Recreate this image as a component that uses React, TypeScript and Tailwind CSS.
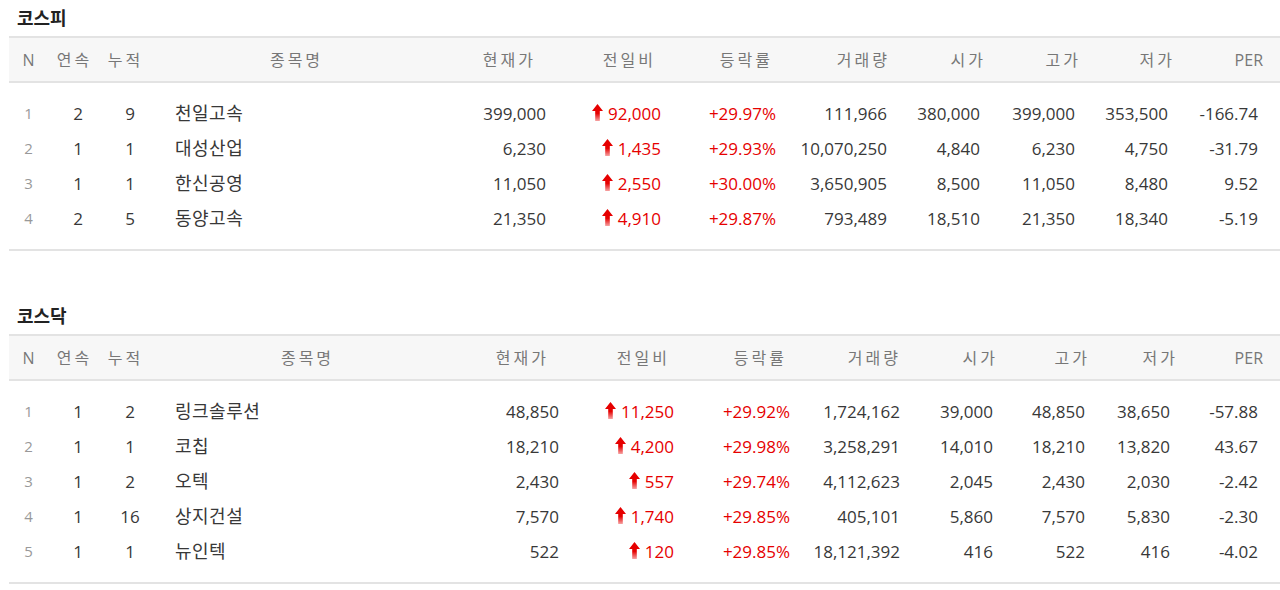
import React from "react";

type Col = { w: string; hp: string; dp: string };

type Row = {
  n: number;
  streak: string;
  total: string;
  name: string;
  price: string;
  diff: string;
  rate: string;
  vol: string;
  open: string;
  high: string;
  low: string;
  per: string;
};

const kospiCols: Col[] = [
  { w: "w-[132px]", hp: "pr-[36px]", dp: "pr-[26px]" },
  { w: "w-[112px]", hp: "pr-[28px]", dp: "pr-[23px]" },
  { w: "w-[114px]", hp: "pr-[25px]", dp: "pr-[22px]" },
  { w: "w-[110px]", hp: "pr-[18px]", dp: "pr-[21px]" },
  { w: "w-[92px]", hp: "pr-[14px]", dp: "pr-[20px]" },
  { w: "w-[94px]", hp: "pr-[13px]", dp: "pr-[19px]" },
  { w: "w-[94px]", hp: "pr-[13px]", dp: "pr-[20px]" },
  { w: "w-[92px]", hp: "pr-[17px] tracking-normal", dp: "pr-[22px]" },
];

const kosdaqCols: Col[] = [
  { w: "w-[126px]", hp: "pr-[39px]", dp: "pr-[29px]" },
  { w: "w-[112px]", hp: "pr-[30px]", dp: "pr-[26px]" },
  { w: "w-[110px]", hp: "pr-[23px]", dp: "pr-[20px]" },
  { w: "w-[110px]", hp: "pr-[19px]", dp: "pr-[20px]" },
  { w: "w-[90px]", hp: "pr-[12px]", dp: "pr-[17px]" },
  { w: "w-[90px]", hp: "pr-[10px]", dp: "pr-[15px]" },
  { w: "w-[88px]", hp: "pr-[10px]", dp: "pr-[18px]" },
  { w: "w-[92px]", hp: "pr-[17px] tracking-normal", dp: "pr-[22px]" },
];

const kospi: Row[] = [
  { n: 1, streak: "2", total: "9", name: "천일고속", price: "399,000", diff: "92,000", rate: "+29.97%", vol: "111,966", open: "380,000", high: "399,000", low: "353,500", per: "-166.74" },
  { n: 2, streak: "1", total: "1", name: "대성산업", price: "6,230", diff: "1,435", rate: "+29.93%", vol: "10,070,250", open: "4,840", high: "6,230", low: "4,750", per: "-31.79" },
  { n: 3, streak: "1", total: "1", name: "한신공영", price: "11,050", diff: "2,550", rate: "+30.00%", vol: "3,650,905", open: "8,500", high: "11,050", low: "8,480", per: "9.52" },
  { n: 4, streak: "2", total: "5", name: "동양고속", price: "21,350", diff: "4,910", rate: "+29.87%", vol: "793,489", open: "18,510", high: "21,350", low: "18,340", per: "-5.19" },
];

const kosdaq: Row[] = [
  { n: 1, streak: "1", total: "2", name: "링크솔루션", price: "48,850", diff: "11,250", rate: "+29.92%", vol: "1,724,162", open: "39,000", high: "48,850", low: "38,650", per: "-57.88" },
  { n: 2, streak: "1", total: "1", name: "코칩", price: "18,210", diff: "4,200", rate: "+29.98%", vol: "3,258,291", open: "14,010", high: "18,210", low: "13,820", per: "43.67" },
  { n: 3, streak: "1", total: "2", name: "오텍", price: "2,430", diff: "557", rate: "+29.74%", vol: "4,112,623", open: "2,045", high: "2,430", low: "2,030", per: "-2.42" },
  { n: 4, streak: "1", total: "16", name: "상지건설", price: "7,570", diff: "1,740", rate: "+29.85%", vol: "405,101", open: "5,860", high: "7,570", low: "5,830", per: "-2.30" },
  { n: 5, streak: "1", total: "1", name: "뉴인텍", price: "522", diff: "120", rate: "+29.85%", vol: "18,121,392", open: "416", high: "522", low: "416", per: "-4.02" },
];

const heads = ["현재가", "전일비", "등락률", "거래량", "시가", "고가", "저가", "PER"];

const UpArrow = () => (
  <svg width="11" height="17" viewBox="0 0 11 17" className="inline-block align-[-1px] mr-[5px]">
    <defs>
      <linearGradient id="upg" x1="0" y1="0" x2="0" y2="1">
        <stop offset="0" stopColor="#e60000" />
        <stop offset="0.55" stopColor="#e60000" />
        <stop offset="1" stopColor="#f6a3a3" />
      </linearGradient>
    </defs>
    <path d="M5.5 0 L11 7 L7.8 7 L7.8 17 L3.2 17 L3.2 7 L0 7 Z" fill="url(#upg)" />
  </svg>
);

const Market = ({ title, rows, cols, nameW }: { title: string; rows: Row[]; cols: Col[]; nameW: string }) => (
  <section>
    <h2 className="pl-2 pt-[6px] pb-[6px] leading-6 text-[18px] font-bold text-[#222]">{title}</h2>
    <table className="table-fixed border-collapse w-[1271px]">
      <colgroup>
        <col className="w-[39px]" />
        <col className="w-[50px]" />
        <col className="w-[52px]" />
        <col className={nameW} />
        {cols.map((c, i) => (
          <col key={i} className={c.w} />
        ))}
      </colgroup>
      <thead>
        <tr className="bg-[#f7f7f7] border-t-2 border-b-2 border-[#e3e3e3] h-[45px] text-[16px] text-[#777] font-normal">
          <th className="font-normal text-center">N</th>
          <th className="font-normal text-center tracking-[3px] pl-[3px]">연속</th>
          <th className="font-normal text-center tracking-[3px] pl-[3px]">누적</th>
          <th className="font-normal text-center tracking-[3px] pl-[3px]">종목명</th>
          {heads.map((h, i) => (
            <th key={h} className={`font-normal text-right tracking-[3px] ${cols[i].hp}`}>
              {h}
            </th>
          ))}
        </tr>
      </thead>
      <tbody className="border-b-2 border-[#e3e3e3]">
        <tr className="h-[14px]">
          <td colSpan={12} />
        </tr>
        {rows.map((r) => {
          const vals = [r.price, r.diff, r.rate, r.vol, r.open, r.high, r.low, r.per];
          return (
            <tr key={r.n} className="h-[35px] text-[17px] text-[#383838]">
              <td className="text-center text-[15px] text-[#999]">{r.n}</td>
              <td className="text-center pl-[10px]">{r.streak}</td>
              <td className="text-center pl-[12px]">{r.total}</td>
              <td className="text-left pl-[25px] text-[18px] tracking-[0.5px]">{r.name}</td>
              {vals.map((v, i) => (
                <td
                  key={i}
                  className={`text-right whitespace-nowrap ${cols[i].dp} ${i === 1 || i === 2 ? "text-[#e60000]" : ""}`}
                >
                  {i === 1 && <UpArrow />}
                  {v}
                </td>
              ))}
            </tr>
          );
        })}
        <tr className="h-[14px]">
          <td colSpan={12} />
        </tr>
      </tbody>
    </table>
  </section>
);

export default function App() {
  return (
    <div
      className="bg-white w-[1280px] h-[590px] overflow-hidden pl-[9px]"
      style={{ fontFamily: '"Open Sans", "Noto Sans CJK KR", sans-serif' }}
    >
      <Market title="코스피" rows={kospi} cols={kospiCols} nameW="w-[290px]" />
      <div className="h-[47px]" />
      <Market title="코스닥" rows={kosdaq} cols={kosdaqCols} nameW="w-[312px]" />
    </div>
  );
}
